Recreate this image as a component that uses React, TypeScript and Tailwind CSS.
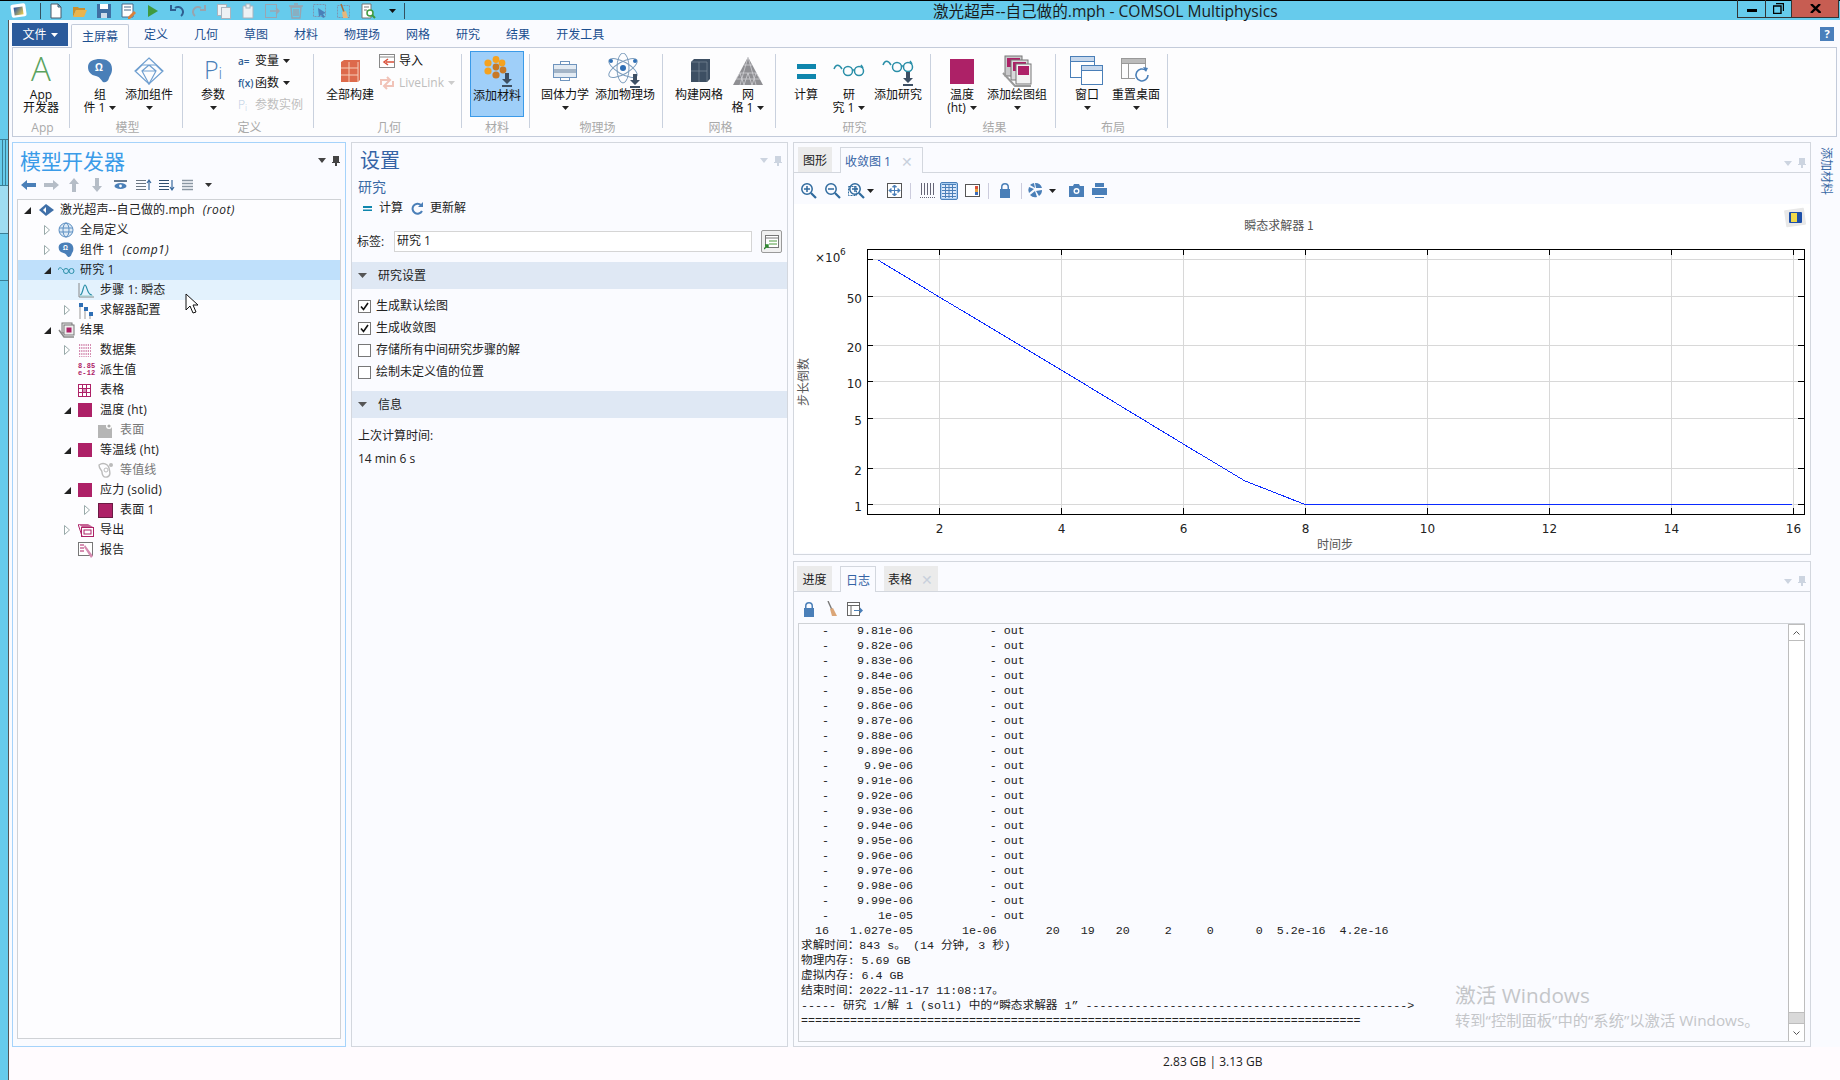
import { ReactNode } from "react";

const BLUE = "#4a7fb8";
const TEAL = "#0f86ad";
const CRIMSON = "#ad2167";

const Caret = ({ c = "#222" }: { c?: string }) => (
    <svg width="7" height="4" viewBox="0 0 7 4" className="inline-block shrink-0">
        <path d="M0 0h7L3.5 4z" fill={c} />
    </svg>
);

const Ico = ({ w = 16, h = 16, children }: { w?: number; h?: number; children: ReactNode }) => (
    <svg width={w} height={h} viewBox={`0 0 ${w} ${h}`} className="shrink-0">
        {children}
    </svg>
);

const DownArrow = ({ x, y }: { x: number; y: number }) => (
    <path d={`M${x + 3} ${y}h4v6h3l-5 5-5-5h3z M${x} ${y + 12}h10v2h-10z`} fill="#3d4f63" />
);

const Glasses = ({ o = 0 }: { o?: number }) => (
    <g fill="none" stroke="#2a8fa8" strokeWidth="1.5" transform={`translate(0 ${o})`}>
        <path d="M1 10c2-5 5-5 8 0" />
        <circle cx="15" cy="12" r="4.5" />
        <circle cx="26" cy="12" r="4.5" />
        <path d="M19.5 11h2M30 9l-2-3" />
    </g>
);

const Blob = ({ s = 26 }: { s?: number }) => (
    <svg width={s} height={s} viewBox="0 0 26 26" className="shrink-0">
        <path d="M1 9C1 3 7 1 13 1c7 0 12 3 12 10 0 5-2 6-3 9-1 4-4 5-6 4-2-2-3-5-7-6C4 17 1 14 1 9z" fill={BLUE} />
        <text x="12" y="13" fontSize="10" fontWeight="700" fill="#fff" textAnchor="middle">Ω</text>
    </svg>
);

const Square = () => <span className="block w-[14px] h-[14px] bg-[#ad2167]" />;

const RibbonIcons = {
    app: <span className="block -mt-[4px] text-[33px] leading-[34px] text-[#5aa35e] font-light">A</span>,
    comp: <Blob />,
    addComp: (
        <Ico w={32} h={28}>
            <g fill="none" stroke="#6f9fd0" strokeWidth="1.2">
                <path d="M16 1l14 13-14 13L2 14z" />
                <path d="M9 8h14l6 6M9 8l-6 6M16 27l-7-13 7-6 7 6zM9 14h14" />
            </g>
        </Ico>
    ),
    pi: (
        <span className="text-[#4a7fb8] font-light text-[25px] leading-[30px]">
            P<span className="text-[16px]">i</span>
        </span>
    ),
    build: (
        <Ico w={22} h={24}>
            <path d="M2 3l3-2h16v20l-2 2H2z" fill="#dd6a4b" />
            <path d="M2 9h17M2 16h17M10 3v20M19 3v20" stroke="#f6cdb9" strokeWidth="1" />
        </Ico>
    ),
    material: (
        <Ico w={36} h={32}>
            <g fill="#f5a21f">
                <circle cx="7" cy="7" r="3.6" /><circle cx="15" cy="3.5" r="3.4" /><circle cx="21" cy="7" r="3.4" />
                <circle cx="7" cy="15" r="3.6" />
            </g>
            <g fill="#c87926">
                <circle cx="15" cy="11" r="3.4" /><circle cx="22" cy="14" r="3.4" /><circle cx="15" cy="19" r="3.6" />
            </g>
            <DownArrow x={21} y={17} />
        </Ico>
    ),
    solid: (
        <Ico w={24} h={20}>
            <rect x="7.5" y="0.5" width="9" height="3" fill="#fff" stroke="#6f94bd" />
            <rect x="7.5" y="16.5" width="9" height="3" fill="#fff" stroke="#6f94bd" />
            <rect x="0.5" y="3.5" width="23" height="13" fill="#e3ebf3" stroke="#6f94bd" />
            <rect x="1" y="8" width="22" height="4" fill="#a3b4c6" />
        </Ico>
    ),
    atom: (
        <Ico w={38} h={36}>
            <g fill="none" stroke="#7c9dbd" strokeWidth="1">
                <ellipse cx="17" cy="15" rx="16" ry="6" transform="rotate(30 17 15)" />
                <ellipse cx="17" cy="15" rx="16" ry="6" transform="rotate(-30 17 15)" />
                <ellipse cx="17" cy="15" rx="6" ry="15" />
            </g>
            <circle cx="17" cy="15" r="3" fill="#2f6fb5" />
            <circle cx="5" cy="8" r="2" fill="#2f6fb5" />
            <circle cx="29" cy="8" r="2" fill="#2f6fb5" />
            <DownArrow x={24} y={21} />
        </Ico>
    ),
    mesh: (
        <Ico w={22} h={24}>
            <path d="M3 3l3-3h16v20l-3 3H3z" fill="#3d4f63" />
            <path d="M3 12h16M11 3v20M19 3v20M3 3h16" stroke="#7d8a98" strokeWidth="0.7" />
        </Ico>
    ),
    meshAdd: (
        <Ico w={32} h={30}>
            <path d="M16 1l15 28H1z" fill="#8f8f93" />
            <path d="M16 1l-8 28M16 1l8 28M12 9h8M8 17h16M4 23h24M4 23l4-6 4 12 4-12 4 12 4-12 4 6" fill="none" stroke="#d8d8dc" strokeWidth="0.7" />
        </Ico>
    ),
    compute: (
        <Ico w={19} h={15}>
            <path d="M0 0h19v5H0zM0 10h19v5H0z" fill={TEAL} />
        </Ico>
    ),
    study: (
        <Ico w={32} h={26}>
            <Glasses o={1} />
        </Ico>
    ),
    studyAdd: (
        <Ico w={32} h={32}>
            <Glasses />
            <DownArrow x={21} y={17} />
        </Ico>
    ),
    temp: <span className="block w-[24px] h-[25px] bg-[#ad2167]" />,
    plotAdd: (
        <Ico w={30} h={32}>
            <rect x="3" y="1" width="17" height="20" fill="#c9c9cb" stroke="#777" />
            <rect x="5" y="3" width="13" height="9" fill={CRIMSON} />
            <rect x="9" y="5" width="17" height="20" fill="#d9d9db" stroke="#777" />
            <rect x="11" y="7" width="13" height="9" fill={CRIMSON} />
            <rect x="14" y="9" width="15" height="20" fill="#f2f2f2" stroke="#777" />
            <rect x="16" y="11" width="11" height="9" fill={CRIMSON} />
            <path d="M1 18l12 13h16" fill="none" stroke="#999" strokeWidth="2" />
        </Ico>
    ),
    windows: (
        <Ico w={34} h={30}>
            <g fill="#fff" stroke={BLUE}>
                <rect x="0.5" y="0.5" width="24" height="21" />
                <rect x="0.5" y="0.5" width="24" height="5" fill="#c7d8ec" />
                <rect x="11.5" y="9.5" width="21" height="19" />
                <rect x="11.5" y="9.5" width="21" height="5" fill="#c7d8ec" />
            </g>
        </Ico>
    ),
    reset: (
        <Ico w={30} h={26}>
            <g fill="none" stroke="#999">
                <rect x="0.5" y="0.5" width="24" height="20" />
                <path d="M1 5.5h23M7.5 6v14" />
            </g>
            <rect x="1" y="1" width="23" height="4" fill="#bbb" />
            <rect x="14" y="10" width="16" height="16" fill="#fdfdfe" />
            <path d="M27 17a6 6 0 1 1-2-4.5" fill="none" stroke={BLUE} strokeWidth="1.6" />
            <path d="M22 9l5 1-2 4z" fill={BLUE} />
        </Ico>
    ),
};

const RibbonBtn = ({
    w,
    icon,
    lines,
    caret,
}: {
    w: string;
    icon: ReactNode;
    lines: string[];
    caret?: boolean;
}) => (
    <div className={`${w} shrink-0 flex flex-col items-center text-[12px] leading-[13px] text-[#111]`}>
        <div className="h-[34px] flex items-center justify-center">{icon}</div>
        {lines.map((l, i) => (
            <div key={i} className="h-[13px] whitespace-nowrap flex items-center gap-[4px]">
                {l}
                {caret && lines.length === 2 && i === 1 && <Caret />}
            </div>
        ))}
        {caret && lines.length === 1 && (
            <div className="h-[13px] flex items-center">
                <Caret />
            </div>
        )}
    </div>
);

const Group = ({ w, label, children }: { w: string; label: string; children: ReactNode }) => (
    <div className={`${w} shrink-0 h-[74px] flex flex-col border-r border-[#c9d1de]`}>
        <div className="flex-1 flex items-start">{children}</div>
        <div className="h-[14px] -mb-[7px] pl-[3px] text-center text-[12px] leading-[14px] text-[#a9a9a9]">{label}</div>
    </div>
);

const SmallItem = ({ icon, text, caret, gray }: { icon: ReactNode; text: string; caret?: boolean; gray?: boolean }) => (
    <div className={`h-[22px] flex items-center gap-[4px] text-[12px] whitespace-nowrap ${gray ? "text-[#bdbdbd]" : "text-[#111]"}`}>
        {icon}
        {text}
        {caret && <Caret c={gray ? "#ccc" : "#222"} />}
    </div>
);

const Ribbon = () => (
    <div className="h-[90px] ml-[3px] mr-[3px] border border-[#c3cbda] bg-[#fdfdfe] pt-[6px] flex">
        <Group w="w-[57px]" label="App">
            <RibbonBtn w="w-[56px]" icon={RibbonIcons.app} lines={["App", "开发器"]} />
        </Group>
        <Group w="w-[113px]" label="模型">
            <div className="flex pl-[6px]">
                <RibbonBtn w="w-[48px]" icon={RibbonIcons.comp} lines={["组", "件 1"]} caret />
                <RibbonBtn w="w-[50px]" icon={RibbonIcons.addComp} lines={["添加组件"]} caret />
            </div>
        </Group>
        <Group w="w-[131px]" label="定义">
            <div className="flex pl-[10px]">
                <RibbonBtn w="w-[40px]" icon={RibbonIcons.pi} lines={["参数"]} caret />
                <div className="ml-[5px] -mt-[4px]">
                    <SmallItem icon={<span className="text-[10px] text-[#2c5c94] w-[13px] font-semibold">a=</span>} text="变量" caret />
                    <SmallItem icon={<span className="text-[10px] text-[#2c5c94] w-[16px] -mr-[3px] font-semibold">f(x)</span>} text="函数" caret />
                    <SmallItem gray icon={<span className="text-[12px] text-[#b9cde3] w-[13px] font-light">P<sub>i</sub></span>} text="参数实例" />
                </div>
            </div>
        </Group>
        <Group w="w-[148px]" label="几何">
            <div className="flex pl-[6px]">
                <RibbonBtn w="w-[60px]" icon={RibbonIcons.build} lines={["全部构建"]} />
                <div className="-mt-[4px] -ml-[1px]">
                    <SmallItem
                        icon={
                            <Ico w={16} h={14}>
                                <rect x="0.5" y="0.5" width="15" height="13" fill="#fff" stroke="#888" />
                                <path d="M1 3h14" stroke="#888" />
                                <path d="M15 8H7M9 5L5 8l4 3" fill="none" stroke="#d9503a" strokeWidth="1.5" />
                            </Ico>
                        }
                        text="导入"
                    />
                    <SmallItem
                        gray
                        icon={
                            <Ico w={16} h={14}>
                                <path d="M2 9V4h8M8 1l3 3-3 3M14 5v5H6M8 13l-3-3 3-3" fill="none" stroke="#f1c3b8" strokeWidth="2" />
                            </Ico>
                        }
                        text="LiveLink"
                        caret
                    />
                </div>
            </div>
        </Group>
        <Group w="w-[68px]" label="材料">
            <div className="ml-[8px] -mt-[3px] w-[54px] h-[66px] bg-[#9fcff9] border border-[#3b9ae8] shrink-0 flex flex-col items-center text-[12px] text-[#111]">
                <div className="h-[37px] pt-[3px] pl-[3px] flex items-center">{RibbonIcons.material}</div>
                <div className="leading-[14px] whitespace-nowrap">添加材料</div>
            </div>
        </Group>
        <Group w="w-[133px]" label="物理场">
            <div className="flex pl-[10px] gap-[3px]">
                <RibbonBtn w="w-[50px]" icon={RibbonIcons.solid} lines={["固体力学"]} caret />
                <RibbonBtn w="w-[64px]" icon={RibbonIcons.atom} lines={["添加物理场"]} />
            </div>
        </Group>
        <Group w="w-[113px]" label="网格">
            <div className="flex pl-[9px] gap-[2px]">
                <RibbonBtn w="w-[54px]" icon={RibbonIcons.mesh} lines={["构建网格"]} />
                <RibbonBtn w="w-[40px]" icon={RibbonIcons.meshAdd} lines={["网", "格 1"]} caret />
            </div>
        </Group>
        <Group w="w-[155px]" label="研究">
            <div className="flex pl-[12px]">
                <RibbonBtn w="w-[36px]" icon={RibbonIcons.compute} lines={["计算"]} />
                <div className="w-[5px]" />
                <RibbonBtn w="w-[40px]" icon={RibbonIcons.study} lines={["研", "究 1"]} caret />
                <div className="w-[3px]" />
                <RibbonBtn w="w-[52px]" icon={RibbonIcons.studyAdd} lines={["添加研究"]} />
            </div>
        </Group>
        <Group w="w-[125px]" label="结果">
            <div className="flex pl-[11px] gap-[3px]">
                <RibbonBtn w="w-[40px]" icon={RibbonIcons.temp} lines={["温度", "(ht)"]} caret />
                <RibbonBtn w="w-[64px]" icon={RibbonIcons.plotAdd} lines={["添加绘图组"]} caret />
            </div>
        </Group>
        <Group w="w-[112px]" label="布局">
            <div className="flex pl-[11px] gap-[3px]">
                <RibbonBtn w="w-[40px]" icon={RibbonIcons.windows} lines={["窗口"]} caret />
                <RibbonBtn w="w-[52px]" icon={RibbonIcons.reset} lines={["重置桌面"]} caret />
            </div>
        </Group>
    </div>
);

// quick access bar, 24px pitch
const quick: ReactNode[] = [
    <path key="n" d="M3 1h7l3 3v11H3z M10 1v3h3" fill="#fff" stroke="#4a5a6a" />,
    <g key="o"><path d="M1 4h5l1 1h6v2H4l-3 7z" fill="#c98f2e" /><path d="M4 7h11l-3 7H1z" fill="#eab44c" /></g>,
    <g key="s"><path d="M1 1h14v14H1z" fill="#3f6fa3" /><path d="M4 1h8v5H4z" fill="#fff" /><path d="M5 10h6v5H5z" fill="#cfdcea" /></g>,
    <g key="sa"><path d="M2 1h11v13H2z" fill="#fff" stroke="#4a6a8a" /><path d="M4 4h7M4 7h7" stroke="#4a6a8a" /><path d="M8 14l6-6 2 2-6 6H8z" fill="#d8803a" /></g>,
    <path key="p" d="M4 2l10 6-10 6z" fill="#3f9a3f" />,
    <path key="u" d="M13 13a5 5 0 1 0-6-8M3 2v5h5" fill="none" stroke="#2f5f90" strokeWidth="2" />,
    <path key="r" d="M3 13a5 5 0 1 1 6-8M13 2v5H8" fill="none" stroke="#9aa3ad" strokeWidth="2" />,
    <g key="c" fill="#eef1f4" stroke="#aab4be"><rect x="1.5" y="1.5" width="9" height="11" /><rect x="5.5" y="4.5" width="9" height="11" /></g>,
    <g key="pa" fill="#eef1f4" stroke="#aab4be"><path d="M3 3h10v12H3z" /><rect x="6" y="1" width="4" height="4" /></g>,
    <g key="d" fill="none" stroke="#9aa6b2"><rect x="1.5" y="1.5" width="11" height="13" /><path d="M6 8h9M12 5l3 3-3 3" strokeWidth="1.5" /></g>,
    <g key="t" fill="none" stroke="#98a4b0" strokeWidth="1.4"><path d="M3 4h10l-1 11H4zM1 3h14M6 1h4M6 6v7M8 6v7M10 6v7" /></g>,
    <g key="se" fill="none" stroke="#7c96b2"><rect x="1.5" y="1.5" width="12" height="12" strokeDasharray="2 1" /><path d="M6 5l8 5-3 1 2 3-2 1-2-3-2 2z" fill="#4a7fb8" stroke="none" /></g>,
    <g key="cl"><rect x="1.5" y="2.5" width="12" height="12" fill="none" stroke="#7c96b2" strokeDasharray="2 1" /><path d="M5 1l3 8" stroke="#a86f3a" strokeWidth="1.5" /><path d="M6 9l4-1 2 7H7z" fill="#e6b67c" /></g>,
    <g key="f"><path d="M2 1h9v14H2z" fill="#fff" stroke="#777" /><path d="M4 4h5M4 7h3" stroke="#777" /><circle cx="10" cy="10" r="3" fill="#fff" stroke="#3f9a3f" strokeWidth="1.5" /><path d="M12 12l3 3" stroke="#3f9a3f" strokeWidth="2" /></g>,
];

const TitleBar = () => (
    <div className="h-[20px] bg-[#66cbec] border-t border-black flex items-center relative shrink-0">
        <div className="w-[40px] pr-[4px] flex justify-center">
            <span className="w-[15px] h-[13px] bg-white rounded-[2px] rotate-[-8deg] flex items-center justify-center">
                <span className="block w-[9px] h-[8px] bg-[linear-gradient(135deg,#1d4fa8,#f3d24a)]" />
            </span>
        </div>
        <div className="w-px h-[16px] bg-[#33505f]" />
        <div className="flex items-center">
            <div className="w-[3px]" />
            {quick.map((q, i) => (
                <div key={i} className="w-[24px] flex justify-center">
                    <Ico>{q}</Ico>
                </div>
            ))}
            <div className="w-[24px] flex justify-center">
                <Caret c="#111" />
            </div>
            <div className="w-px h-[16px] bg-[#33505f]" />
        </div>
        <div className="ml-[528px] text-[15.6px] leading-[20px] text-[#1a1a1a] whitespace-nowrap">激光超声--自己做的.mph - COMSOL Multiphysics</div>
        <div className="ml-auto mr-px h-[18px] -mt-[1px] flex border border-[#333] border-t-0 self-start">
            <div className="w-[28px] flex items-center justify-center border-r border-[#333]">
                <span className="block w-[10px] h-[3px] mt-[4px] bg-black" />
            </div>
            <div className="w-[26px] flex items-center justify-center border-r border-[#333]">
                <Ico w={11} h={11}>
                    <path d="M3 0.5h7.5V8M0.5 3h7.5v7.5H0.5z" fill="none" stroke="#000" strokeWidth="1.4" />
                </Ico>
            </div>
            <div className="w-[46px] flex items-center justify-center bg-[#c75d52]">
                <Ico w={11} h={9}>
                    <path d="M1 0l9.5 9M10 0L1 9" stroke="#000" strokeWidth="2.4" />
                </Ico>
            </div>
        </div>
    </div>
);

const tabs = ["定义", "几何", "草图", "材料", "物理场", "网格", "研究", "结果", "开发工具"];

const TabRow = () => (
    <div className="h-[27px] flex items-end pl-[3px] relative shrink-0">
        <div className="w-[56px] h-[23px] mb-[1px] bg-[#2b5a9b] text-white text-[12px] flex items-center justify-center gap-[4px]">
            文件 <Caret c="#fff" />
        </div>
        <div className="ml-[3px] w-[58px] h-[24px] -mb-px z-10 bg-[#fdfdfe] border border-b-0 border-[#c3cbda] rounded-t-[2px] text-[12px] text-[#1c4f8f] flex items-center justify-center">
            主屏幕
        </div>
        <div className="flex ml-[15px] gap-[26px] h-[24px] items-center text-[12px] text-[#1c4f8f]">
            {tabs.map((t) => (
                <span key={t}>{t}</span>
            ))}
        </div>
        <span className="absolute right-[6px] top-[7px] w-[14px] h-[14px] bg-[#4a7fbb] text-white text-[11px] leading-[14px] font-bold text-center">?</span>
    </div>
);

const Arrow = ({ kind }: { kind?: "open" | "closed" }) => (
    <span className="w-[14px] ml-[2px] shrink-0 flex">
        {kind === "open" && (
            <Ico w={7} h={7}>
                <path d="M7 0v7H0z" fill="#222" />
            </Ico>
        )}
        {kind === "closed" && (
            <Ico w={6} h={10}>
                <path d="M.5.5l5 4.5-5 4.5z" fill="#fff" stroke="#9aa" />
            </Ico>
        )}
    </span>
);

const TreeIcons: Record<string, ReactNode> = {
    root: (
        <Ico w={17} h={14}>
            <path d="M8 1l8 6-8 6-7-6z" fill="#3f6fa8" />
            <path d="M5 7l3-3v6z" fill="#fff" />
        </Ico>
    ),
    globe: (
        <Ico>
            <g fill="#dce9f5" stroke="#5d8fc2">
                <circle cx="8" cy="8" r="7" />
                <ellipse cx="8" cy="8" rx="3" ry="7" fill="none" />
                <path d="M1 6h14M1 10h14" fill="none" />
            </g>
        </Ico>
    ),
    comp: <Blob s={16} />,
    study: (
        <Ico w={17} h={12}>
            <g fill="none" stroke="#2a8fa8" strokeWidth="1">
                <path d="M0 6c1-3 3-3 5 0" />
                <circle cx="8" cy="7" r="2.5" />
                <circle cx="13.5" cy="7" r="2.5" />
            </g>
        </Ico>
    ),
    step: (
        <Ico>
            <path d="M1 1v14h15" fill="none" stroke="#888" />
            <path d="M2 13c3 0 3-10 5-10s2 10 7 10" fill="none" stroke="#2a8fa8" strokeWidth="1.2" />
            <path d="M2 14h13" stroke="#9cc" />
        </Ico>
    ),
    solver: (
        <Ico h={17}>
            <path d="M2 1v16M7 6v11M12 11v6" stroke="#999" />
            <path d="M1 1h4v4H1zM6 5h4v4H6zM11 10h4v4h-4z" fill="#2f6fb5" />
        </Ico>
    ),
    results: (
        <Ico w={17} h={16}>
            <rect x="4" y="1" width="10" height="10" fill="#e8e8e8" stroke="#777" />
            <rect x="6" y="3" width="10" height="10" fill="#eee" stroke="#777" />
            <rect x="8.5" y="5.5" width="5" height="5" fill={CRIMSON} />
            <path d="M1 8l5 7h10" fill="none" stroke="#888" strokeWidth="1.5" />
        </Ico>
    ),
    dataset: (
        <Ico w={13} h={13}>
            <path d="M1 1h12M1 4h12M1 7h12M1 10h12M1 13h12" stroke={CRIMSON} strokeDasharray="1.2 1" strokeWidth="1.2" />
        </Ico>
    ),
    derived: (
        <span className="block w-[16px] text-[7px] leading-[7px] font-bold text-[#ad2167] font-['Liberation_Mono',monospace]">
            8.85
            <br />
            e-12
        </span>
    ),
    table: (
        <Ico w={13} h={13}>
            <rect x="0.5" y="0.5" width="12" height="12" fill="#fff" stroke={CRIMSON} />
            <path d="M0 4.5h13M0 8.5h13M4.5 0v13M8.5 0v13" stroke={CRIMSON} />
            <rect x="4.5" y="4.5" width="4" height="4" fill={CRIMSON} opacity="0.5" />
        </Ico>
    ),
    square: <Square />,
    surfaceOff: (
        <Ico h={15}>
            <rect x="0" y="2" width="14" height="13" fill="#b5b5b5" />
            <circle cx="11" cy="3" r="3" fill="#fff" />
            <circle cx="11" cy="3" r="1.6" fill="#aaa" />
        </Ico>
    ),
    contourOff: (
        <Ico>
            <path d="M1 3c4-3 9-1 10 3s2 8-2 9-5-3-5-5-3-3-3-7z" fill="none" stroke="#bbb" strokeWidth="1.4" />
            <circle cx="8" cy="8" r="2" fill="none" stroke="#bbb" />
            <circle cx="13" cy="3" r="2" fill="#bbb" />
        </Ico>
    ),
    squareBox: <span className="block w-[15px] h-[15px] bg-[#ad2167] border border-[#6b1a44]" />,
    exportIcon: (
        <Ico w={16} h={14}>
            <path d="M0 1h10l5 3H4z" fill={CRIMSON} opacity="0.7" />
            <rect x="3.5" y="4.5" width="12" height="9" fill="#fff" stroke={CRIMSON} />
            <rect x="6" y="7" width="7" height="4" fill="none" stroke={CRIMSON} />
            <path d="M0 1l4 12" stroke={CRIMSON} />
        </Ico>
    ),
    report: (
        <Ico h={16}>
            <rect x="0.5" y="0.5" width="14" height="13" fill="#fff" stroke="#777" />
            <path d="M2 3h4M2 6h4M2 9h4" stroke={CRIMSON} />
            <path d="M7 3l8 11-2 2L6 5z" fill="#d58ab0" />
        </Ico>
    ),
};

type Row = {
    level: number;
    arrow?: "open" | "closed";
    icon: string;
    text: string;
    italic?: string;
    bg?: string;
    gray?: boolean;
};

const rows: Row[] = [
    { level: 0, arrow: "open", icon: "root", text: "激光超声--自己做的.mph", italic: "(root)" },
    { level: 1, arrow: "closed", icon: "globe", text: "全局定义" },
    { level: 1, arrow: "closed", icon: "comp", text: "组件 1", italic: "(comp1)" },
    { level: 1, arrow: "open", icon: "study", text: "研究 1", bg: "bg-[#bfe0fb]" },
    { level: 2, icon: "step", text: "步骤 1: 瞬态", bg: "bg-[#e3f2fd]" },
    { level: 2, arrow: "closed", icon: "solver", text: "求解器配置" },
    { level: 1, arrow: "open", icon: "results", text: "结果" },
    { level: 2, arrow: "closed", icon: "dataset", text: "数据集" },
    { level: 2, icon: "derived", text: "派生值" },
    { level: 2, icon: "table", text: "表格" },
    { level: 2, arrow: "open", icon: "square", text: "温度 (ht)" },
    { level: 3, icon: "surfaceOff", text: "表面", gray: true },
    { level: 2, arrow: "open", icon: "square", text: "等温线 (ht)" },
    { level: 3, icon: "contourOff", text: "等值线", gray: true },
    { level: 2, arrow: "open", icon: "square", text: "应力 (solid)" },
    { level: 3, arrow: "closed", icon: "squareBox", text: "表面 1" },
    { level: 2, arrow: "closed", icon: "exportIcon", text: "导出" },
    { level: 2, icon: "report", text: "报告" },
];

const indent = ["pl-[4px]", "pl-[24px]", "pl-[44px]", "pl-[64px]"];

const PanelPins = ({ faint }: { faint?: boolean }) => {
    const c = faint ? "#ccd4e0" : "#444";
    return (
        <div className="flex items-center gap-[6px]">
            <Ico w={8} h={5}>
                <path d="M0 0h8L4 5z" fill={c} />
            </Ico>
            <Ico w={8} h={10}>
                <path d="M1 0h6v6h1v1H5v3H3V7H0V6h1z" fill={c} />
            </Ico>
        </div>
    );
};

const ModelPanel = () => (
    <div className="w-[334px] shrink-0 border border-[#a5d3fb] flex flex-col">
        <div className="h-[31px] flex items-center justify-between pl-[7px] pr-[5px] pt-[4px]">
            <span className="text-[21px] leading-[26px] text-[#3a9be8]">模型开发器</span>
            <PanelPins />
        </div>
        <div className="h-[20px] pt-[2px] flex items-center pl-[8px]">
            {[
                <path key="a" d="M15 5H6V2L0 7l6 5V9h9z" fill={BLUE} />,
                <path key="b" d="M0 5h9V2l6 5-6 5V9H0z" fill="#b5bdc7" />,
                <path key="c" d="M5 14V6H2l5-6 5 6H9v8z" fill="#b5bdc7" />,
                <path key="d" d="M5 0v8H2l5 6 5-6H9V0z" fill="#b5bdc7" />,
                <g key="e"><path d="M1 3h13" stroke="#33506e" strokeWidth="1.5" /><ellipse cx="7.5" cy="8" rx="6" ry="3" fill={BLUE} /><circle cx="7.5" cy="8" r="1.4" fill="#fff" /></g>,
                <g key="f" stroke="#6a7682"><path d="M0 2.5h10M0 5.5h10M0 8.5h10M0 11.5h10" /><path d="M13 12V3M11 5l2-3 2 3" fill="none" stroke="#3a6a9e" strokeWidth="1.2" /></g>,
                <g key="g" stroke="#2f4f70"><path d="M0 2.5h10M0 5.5h10M0 8.5h10M0 11.5h10" /><path d="M13 2v9M11 9l2 3 2-3" fill="none" stroke="#3a6a9e" strokeWidth="1.2" /></g>,
                <g key="h" stroke="#8a96a2"><path d="M0 2.5h11M0 5.5h11M0 8.5h11M0 11.5h11" strokeWidth="1.5" /></g>,
            ].map((p, i) => (
                <div key={i} className="w-[23px] shrink-0">
                    <Ico w={16} h={14}>{p}</Ico>
                </div>
            ))}
            <Caret c="#333" />
        </div>
        <div className="mt-[5px] mx-[4px] mb-[7px] flex-1 border border-[#cfd2d6] bg-[#fdfdff]">
            {rows.map((r, i) => (
                <div key={i} className={`h-[20px] flex items-center text-[12px] tracking-[0.15px] text-[#222] whitespace-nowrap ${indent[r.level]} ${r.bg ?? ""}`}>
                    <Arrow kind={r.arrow} />
                    <span className="w-[22px] shrink-0 flex items-center">{TreeIcons[r.icon]}</span>
                    <span className={r.gray ? "text-[#777]" : ""}>{r.text}</span>
                    {r.italic && <span className="ml-[8px] italic tracking-[0.5px]">{r.italic}</span>}
                </div>
            ))}
        </div>
    </div>
);

const SectionHead = ({ text, mt }: { text: string; mt: string }) => (
    <div className={`h-[27px] ${mt} bg-[#dfe8f4] flex items-center pl-[6px] text-[12px] text-[#222]`}>
        <span className="w-[20px]">
            <Ico w={9} h={5}>
                <path d="M0 0h9L4.5 5z" fill="#555" />
            </Ico>
        </span>
        {text}
    </div>
);

const Check = ({ on, text }: { on?: boolean; text: string }) => (
    <div className="h-[22px] flex items-center gap-[5px] text-[12px] text-[#222] pl-[6px]">
        <span className="w-[13px] h-[13px] border border-[#777] bg-white flex items-center justify-center">
            {on && (
                <Ico w={9} h={9}>
                    <path d="M1 4.5l2.5 3L8 1" fill="none" stroke="#111" strokeWidth="1.6" />
                </Ico>
            )}
        </span>
        {text}
    </div>
);

const SettingsPanel = () => (
    <div className="w-[437px] shrink-0 border border-[#d3d7de] flex flex-col">
        <div className="h-[35px] flex items-center justify-between pl-[8px] pr-[5px]">
            <span className="text-[20px] leading-[26px] text-[#3563a5]">设置</span>
            <PanelPins faint />
        </div>
        <div className="h-[18px] pl-[6px] text-[14px] leading-[18px] text-[#3a6aa5]">研究</div>
        <div className="h-[20px] mt-[2px] flex items-center text-[12px] text-[#222]">
            <span className="ml-[11px]">
                <Ico w={9} h={5}>
                    <path d="M0 0h9v2H0zM0 3.5h9v1.5H0z" fill={TEAL} />
                </Ico>
            </span>
            <span className="ml-[7px]">计算</span>
            <span className="ml-[8px]">
                <Ico w={13} h={13}>
                    <path d="M11 9a5 5 0 1 1-1-6" fill="none" stroke={BLUE} strokeWidth="2" />
                    <path d="M12 0v5H7z" fill={BLUE} />
                </Ico>
            </span>
            <span className="ml-[6px]">更新解</span>
        </div>
        <div className="mt-[12px] h-[23px] flex items-center text-[12px] text-[#222] pl-[5px]">
            <span className="w-[37px]">标签:</span>
            <div className="w-[358px] h-[21px] border border-[#d5d5d5] bg-white pl-[2px] leading-[17px]">研究 1</div>
            <div className="ml-[9px] w-[21px] h-[23px] border border-[#9a9a9a] rounded-[2px] bg-[#f0f0f0] flex items-center justify-center">
                <Ico w={15} h={16}>
                    <rect x="1.5" y="1.5" width="13" height="12" fill="#fff" stroke="#777" />
                    <path d="M2 4h12" stroke="#777" />
                    <path d="M5 7h8M5 10h8" stroke="#4f9a3f" />
                    <path d="M0 15l4-4M1 11h3v3" fill="none" stroke="#2d8a2d" strokeWidth="1.4" />
                </Ico>
            </div>
        </div>
        <SectionHead text="研究设置" mt="mt-[9px]" />
        <div className="mt-[6px]">
            <Check on text="生成默认绘图" />
            <Check on text="生成收敛图" />
            <Check text="存储所有中间研究步骤的解" />
            <Check text="绘制未定义值的位置" />
        </div>
        <SectionHead text="信息" mt="mt-[8px]" />
        <div className="mt-[9px] h-[18px] pl-[6px] text-[12px] leading-[18px] text-[#222]">上次计算时间:</div>
        <div className="mt-[5px] h-[18px] pl-[6px] text-[12px] leading-[18px] text-[#222]">14 min 6 s</div>
    </div>
);

const hGrid = [
    { y: 259.5 },
    { y: 296.5, l: "50" },
    { y: 345.5, l: "20" },
    { y: 381.5, l: "10" },
    { y: 418.5, l: "5" },
    { y: 468.5, l: "2" },
    { y: 504.5, l: "1" },
];
const vGrid = [939.5, 1061.5, 1183.5, 1305.5, 1427.5, 1549.5, 1671.5, 1793.5];

const Chart = () => (
    <svg width="1016" height="349" viewBox="794 204 1016 349" className="block bg-white" fontFamily="'DejaVu Sans',sans-serif" fontSize="12" fill="#222">
        <g stroke="#d8d8d8">
            {hGrid.map((g) => (
                <path key={g.y} d={`M867 ${g.y}H1804`} />
            ))}
            {vGrid.map((x) => (
                <path key={x} d={`M${x} 249V514`} />
            ))}
        </g>
        <g stroke="#000">
            {hGrid.map((g) => (
                <path key={g.y} d={`M867 ${g.y}h6M1798 ${g.y}h6`} />
            ))}
            {vGrid.map((x) => (
                <path key={x} d={`M${x} 249v6M${x} 514v-6`} />
            ))}
            <rect x="867.5" y="249.5" width="937" height="265" fill="none" />
        </g>
        <polyline points="878,260 939.3,297 1061.3,370 1183.3,444 1245,481 1258,486 1305,504.5 1792,504.5" fill="none" stroke="#0a2aff" shapeRendering="crispEdges" />
        {hGrid.filter((g) => g.l).map((g) => (
            <text key={g.y} x="862" y={g.y + 6} textAnchor="end">{g.l}</text>
        ))}
        {[2, 4, 6, 8, 10, 12, 14, 16].map((t, i) => (
            <text key={t} x={vGrid[i]} y="533" textAnchor="middle">{t}</text>
        ))}
        <text x="815" y="262">×10</text>
        <text x="840" y="255" fontSize="9">6</text>
        <g fontFamily="'Noto Sans CJK SC',sans-serif" fill="#555" fontSize="12">
            <text x="1279" y="230" textAnchor="middle">瞬态求解器 1</text>
            <text x="1335" y="549" textAnchor="middle">时间步</text>
            <text x="0" y="0" textAnchor="middle" transform="translate(808 382) rotate(-90)">步长倒数</text>
        </g>
        <g transform="translate(1785 208)">
            <rect x="0" y="1" width="20" height="17" rx="1" fill="#e8e8e8" transform="rotate(-8 10 9)" />
            <rect x="4" y="4" width="13" height="11" rx="1" fill="#1d4fa8" />
            <rect x="6" y="5" width="6" height="9" fill="#f0d94a" />
        </g>
    </svg>
);

const Tb = ({ children }: { children: ReactNode }) => (
    <div className="w-[22px] h-[22px] flex items-center justify-center">
        <Ico w={17} h={17}>{children}</Ico>
    </div>
);

const Sep = ({ tight }: { tight?: boolean }) => <div className={`w-px h-[16px] bg-[#ccd] ml-[5px] ${tight ? "mr-[2px]" : "mr-[5px]"}`} />;

const LockIcon = (
    <g fill={BLUE}>
        <path d="M4 8V5a4 4 0 0 1 8 0v3h-1.5V5a2.5 2.5 0 0 0-5 0v3z" />
        <rect x="3" y="7" width="10" height="9" />
    </g>
);

const Mag = ({ plus }: { plus?: boolean }) => (
    <g fill="none" stroke="#2f6a9e" strokeWidth="1.5">
        <circle cx="7" cy="7" r="5.2" />
        <path d="M11 11l5 5" strokeWidth="2.2" />
        <path d={plus ? "M4 7h6M7 4v6" : "M4 7h6"} />
    </g>
);

const GraphPanel = () => (
    <div className="h-[413px] border border-[#d3d7de] flex flex-col">
        <div className="h-[30px] flex items-end pl-[4px] border-b border-[#d3d7de] relative">
            <div className="w-[34px] h-[25px] pt-[2px] bg-[#ebebeb] text-[12px] text-[#222] flex items-center justify-center">图形</div>
            <div className="ml-[8px] w-[83px] h-[26px] pt-[2px] -mb-px bg-[#fafbff] border border-b-0 border-[#d3d7de] text-[12px] text-[#3563a5] flex items-center pl-[4px] gap-[10px]">
                收敛图 1 <span className="text-[#c8d0dc] text-[14px] leading-none">✕</span>
            </div>
            <div className="absolute right-[4px] bottom-[4px]">
                <PanelPins faint />
            </div>
        </div>
        <div className="h-[31px] pt-[4px] flex items-center pl-[3px]">
            <Tb><Mag plus /></Tb>
            <div className="w-[2px]" />
            <Tb><Mag /></Tb>
            <div className="w-[2px]" />
            <Tb><rect x="0.5" y="4.5" width="8" height="9" fill="none" stroke="#2f6a9e" strokeDasharray="2 1" /><Mag plus /></Tb>
            <Caret c="#222" />
            <div className="w-[9px]" />
            <Tb><rect x="1.5" y="1.5" width="14" height="14" fill="#fff" stroke="#555" /><path d="M8.5 3v11M3 8.5h11M8.5 3l-2 2h4zM8.5 14l-2-2h4zM3 8.5l2-2v4zM14 8.5l-2-2v4z" fill={BLUE} stroke={BLUE} /></Tb>
            <Sep />
            <Tb><path d="M2.5 1v12M5.5 1v12M8.5 1v12M11.5 1v12M14.5 1v12" stroke="#667" /><path d="M1 15.5h15" stroke="#667" strokeDasharray="1 1" /></Tb>
            <div className="bg-[#a9cdf1] border border-[#4a7fb8] rounded-[2px] w-[18px] h-[18px] ml-[2px] mr-[3px] flex items-center justify-center">
                <Ico w={14} h={14}>
                    <rect x="0" y="0" width="14" height="14" fill="#dfeafa" />
                    <path d="M0 .5h14M0 3.5h14M0 6.5h14M0 9.5h14M0 12.5h14M3.5 0v14M7 0v14M10.5 0v14" stroke={BLUE} />
                </Ico>
            </div>
            <Tb><rect x="1.5" y="2.5" width="14" height="12" fill="#fff" stroke="#555" /><path d="M11 4h3v3h-3z" fill="#d9503a" /><path d="M11 7h3v3h-3z" fill="#e9a13a" /><path d="M11 10h3v3h-3z" fill="#3a6ab8" /></Tb>
            <Sep />
            <Tb>{LockIcon}</Tb>
            <Sep tight />
            <Tb><g fill={BLUE}><path d="M8 1a7 7 0 0 1 7 5H9zM15 8a7 7 0 0 1-3 6L9 9zM10 15a7 7 0 0 1-7-2l5-4zM2 11a7 7 0 0 1 0-6l5 2zM3 3a7 7 0 0 1 4-2l1 5z" /></g></Tb>
            <div className="w-[3px]" />
            <Caret c="#222" />
            <div className="w-[9px]" />
            <Tb><path d="M1 4h4l1-2h5l1 2h4v11H1z" fill={BLUE} /><circle cx="8.5" cy="9" r="3" fill="#fff" /><circle cx="8.5" cy="9" r="1.6" fill={BLUE} /></Tb>
            <div className="w-[1px]" />
            <Tb><path d="M4 1h9v4H4zM1 6h15v7H1zM4 12h9v4H4z" fill={BLUE} /><path d="M4 13h9v2H4z" fill="#fff" /></Tb>
        </div>
        <Chart />
    </div>
);

const values = [
    "9.81e-06", "9.82e-06", "9.83e-06", "9.84e-06", "9.85e-06", "9.86e-06", "9.87e-06", "9.88e-06", "9.89e-06", "9.9e-06",
    "9.91e-06", "9.92e-06", "9.93e-06", "9.94e-06", "9.95e-06", "9.96e-06", "9.97e-06", "9.98e-06", "9.99e-06", "1e-05",
];

const logLines = [
    ...values.map((v) => "   -    " + v.padStart(8) + " ".repeat(11) + "- out"),
    "  16   1.027e-05       1e-06       20   19   20     2     0      0  5.2e-16  4.2e-16",
    "求解时间：843 s。 (14 分钟, 3 秒)",
    "物理内存: 5.69 GB",
    "虚拟内存: 6.4 GB",
    "结束时间：2022-11-17 11:08:17。",
    "----- 研究 1/解 1 (sol1) 中的“瞬态求解器 1” " + "-".repeat(46) + ">",
    "=".repeat(80),
];

const LogPanel = () => (
    <div className="h-[486px] border border-[#d3d7de] flex flex-col">
        <div className="h-[30px] flex items-end pl-[3px] border-b border-[#d3d7de] relative">
            <div className="w-[35px] h-[25px] pt-[3px] bg-[#ebebeb] text-[12px] text-[#222] flex items-center justify-center">进度</div>
            <div className="ml-[8px] w-[36px] h-[26px] pt-[3px] -mb-px bg-[#fafbff] border border-b-0 border-[#d3d7de] text-[12px] text-[#3563a5] flex items-center justify-center">日志</div>
            <div className="ml-[8px] w-[54px] h-[25px] pt-[3px] bg-[#ebebeb] text-[12px] text-[#222] flex items-center pl-[4px] gap-[9px]">
                表格 <span className="text-[#c8d0dc] text-[14px] leading-none">✕</span>
            </div>
            <div className="absolute right-[4px] bottom-[5px]">
                <PanelPins faint />
            </div>
        </div>
        <div className="h-[31px] pt-[2px] flex items-center pl-[7px] gap-[7px]">
            <Ico>{LockIcon}</Ico>
            <Ico>
                <path d="M4 0l4 9" stroke="#777" strokeWidth="1.4" />
                <path d="M6 8l3-1 4 8H8z" fill="#dba678" />
            </Ico>
            <Ico>
                <rect x="0.5" y="1.5" width="12" height="13" fill="#fff" stroke="#666" />
                <path d="M1 4.5h12M4 5v9" stroke="#666" />
                <path d="M7 9h6V6.5l3 3-3 3V10H7z" fill={BLUE} />
            </Ico>
        </div>
        <div className="mx-[4px] mb-[4px] w-[1007px] flex-1 border-t border-l border-b border-[#cfd2d6] flex min-h-0">
            <pre className="flex-1 min-w-0 overflow-hidden pl-[2px] font-['Liberation_Mono','Noto_Sans_CJK_SC',monospace] text-[11.67px] leading-[15px] text-[#222]">
                {logLines.join("\n")}
            </pre>
            <div className="w-[17px] shrink-0 bg-white border-x border-[#bdbdbd] flex flex-col">
                <div className="h-[17px] border-y border-[#bdbdbd] flex items-center justify-center">
                    <Ico w={7} h={4}>
                        <path d="M.5 3.5l3-3 3 3" fill="none" stroke="#555" />
                    </Ico>
                </div>
                <div className="flex-1" />
                <div className="h-[12px] bg-[#d9d9d9] border-y border-[#bdbdbd]" />
                <div className="h-[17px] flex items-center justify-center">
                    <Ico w={7} h={4}>
                        <path d="M.5.5l3 3 3-3" fill="none" stroke="#555" />
                    </Ico>
                </div>
            </div>
        </div>
    </div>
);

const App = () => {
    return (
        <div className="w-[1840px] h-[1080px] relative overflow-hidden bg-[#fafbff] flex flex-col font-['Open_Sans','Noto_Sans_CJK_SC',sans-serif]">
            <TitleBar />
            <div className="flex flex-1 min-h-0">
                <div className="w-[9px] shrink-0 bg-[#66cbec] border-r border-[#555] flex flex-col">
                    <div className="h-[119px]" />
                    <div className="h-[47px] border-y border-[#3a7f96] bg-[repeating-linear-gradient(90deg,#66cbec_0,#66cbec_2px,#3a7f96_2px,#3a7f96_3px)]" />
                    <div className="h-[48px] bg-[#9fdcf1] border-b border-[#3a7f96]" />
                    <div className="h-[47px] border-b border-[#3a7f96]" />
                </div>
                <div className="flex-1 min-w-0 flex flex-col">
                    <TabRow />
                    <Ribbon />
                    <div className="mt-[5px] ml-[3px] h-[905px] flex gap-[5px]">
                        <ModelPanel />
                        <SettingsPanel />
                        <div className="w-[1018px] shrink-0 flex flex-col gap-[6px]">
                            <GraphPanel />
                            <LogPanel />
                        </div>
                        <div className="-ml-[5px] flex-1 pt-[5px] flex justify-center">
                            <span className="text-[12px] leading-[14px] text-[#3a6aa5] [writing-mode:vertical-rl] [text-orientation:sideways]">添加材料</span>
                        </div>
                    </div>
                    <div className="flex-1 bg-[#fffbfe] flex items-center pl-[1154px] text-[12px] text-[#222] pb-[3px]">2.83 GB | 3.13 GB</div>
                </div>
            </div>
            <div className="absolute left-[1455px] top-[980px] text-[#c4c6c9] pointer-events-none whitespace-nowrap">
                <div className="text-[20.7px] leading-[30px]">激活 Windows</div>
                <div className="text-[15.3px] leading-[20px]">转到“控制面板”中的“系统”以激活 Windows。</div>
            </div>
            <svg width="14" height="22" viewBox="0 0 14 22" className="absolute left-[185px] top-[293px]">
                <path d="M1 1v16l4-4 3 7 3-1-3-7h5z" fill="#fff" stroke="#111" />
            </svg>
        </div>
    );
};

export default App;
